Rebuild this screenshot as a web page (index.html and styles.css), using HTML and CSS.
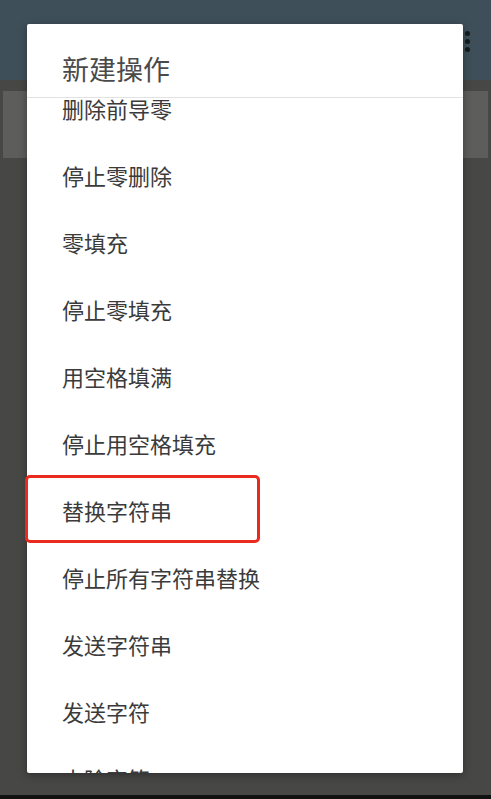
FILE: index.html
```html
<!DOCTYPE html>
<html lang="zh-CN">
<head>
<meta charset="UTF-8">
<meta name="viewport" content="width=device-width, initial-scale=1.0">
<title>新建操作</title>
<link rel="stylesheet" href="styles.css">
</head>
<body>
<div class="screen">
    <header class="appbar">
        <span class="overflow-dots"><i></i><i></i><i></i></span>
    </header>
    <main class="content">
        <div class="card"></div>
    </main>
    <div class="navbar"></div>

    <div class="dialog">
        <h2 class="dialog-title">新建操作</h2>
        <div class="dialog-list">
            <ul class="actions">
                <li>删除前导零</li>
                <li>停止零删除</li>
                <li>零填充</li>
                <li>停止零填充</li>
                <li>用空格填满</li>
                <li>停止用空格填充</li>
                <li>替换字符串</li>
                <li>停止所有字符串替换</li>
                <li>发送字符串</li>
                <li>发送字符</li>
                <li>去除字符</li>
            </ul>
        </div>
        <div class="highlight"></div>
    </div>
</div>
</body>
</html>
```

FILE: styles.css
```css
body {
    margin: 0;
    background-color: #474846;
    font-family: "Noto Sans CJK SC", "Noto Sans", sans-serif;
}
.screen {
    position: relative;
    height: 799px;
    overflow: hidden;
    display: flex;
    flex-direction: column;
}
.appbar {
    height: 80px;
    background-color: #3f4f59;
    display: flex;
    justify-content: flex-end;
    padding: 31px 21px 0 0;
    box-sizing: border-box;
}
.overflow-dots {
    display: flex;
    flex-direction: column;
    gap: 3px;
}
.overflow-dots i {
    width: 5px;
    height: 5px;
    border-radius: 50%;
    background-color: #151a1d;
}
.content {
    flex: 1;
    padding: 11px 3px 0 3px;
}
.card {
    height: 67px;
    background-color: #5d5d5c;
}
.navbar {
    height: 4px;
    background-color: #111;
}

/* dialog sits over the page */
.dialog {
    position: absolute;
    left: 27px;
    top: 24px;
    width: 436px;
    height: 749px;
    background-color: #fff;
    border-radius: 2px;
    box-shadow: 0 2px 8px rgba(0, 0, 0, 0.35);
    display: flex;
    flex-direction: column;
}
.dialog-title {
    margin: 0;
    height: 74px;
    box-sizing: border-box;
    padding: 31px 0 0 35px;
    font-size: 27px;
    font-weight: normal;
    line-height: 1;
    color: #4a4a4a;
    border-bottom: 1px solid #e2e2e2;
}
.dialog-list {
    flex: 1;
    overflow: hidden;
}
.actions {
    list-style: none;
    margin: -23px 0 0 0;
    padding: 0;
}
.actions li {
    height: 67px;
    line-height: 67px;
    padding-left: 35px;
    font-size: 22px;
    color: #3b3b3b;
}
.highlight {
    position: absolute;
    left: -2px;
    top: 451px;
    width: 235px;
    height: 68px;
    box-sizing: border-box;
    border: 3px solid #ea2a1f;
    border-radius: 5px;
}
```
